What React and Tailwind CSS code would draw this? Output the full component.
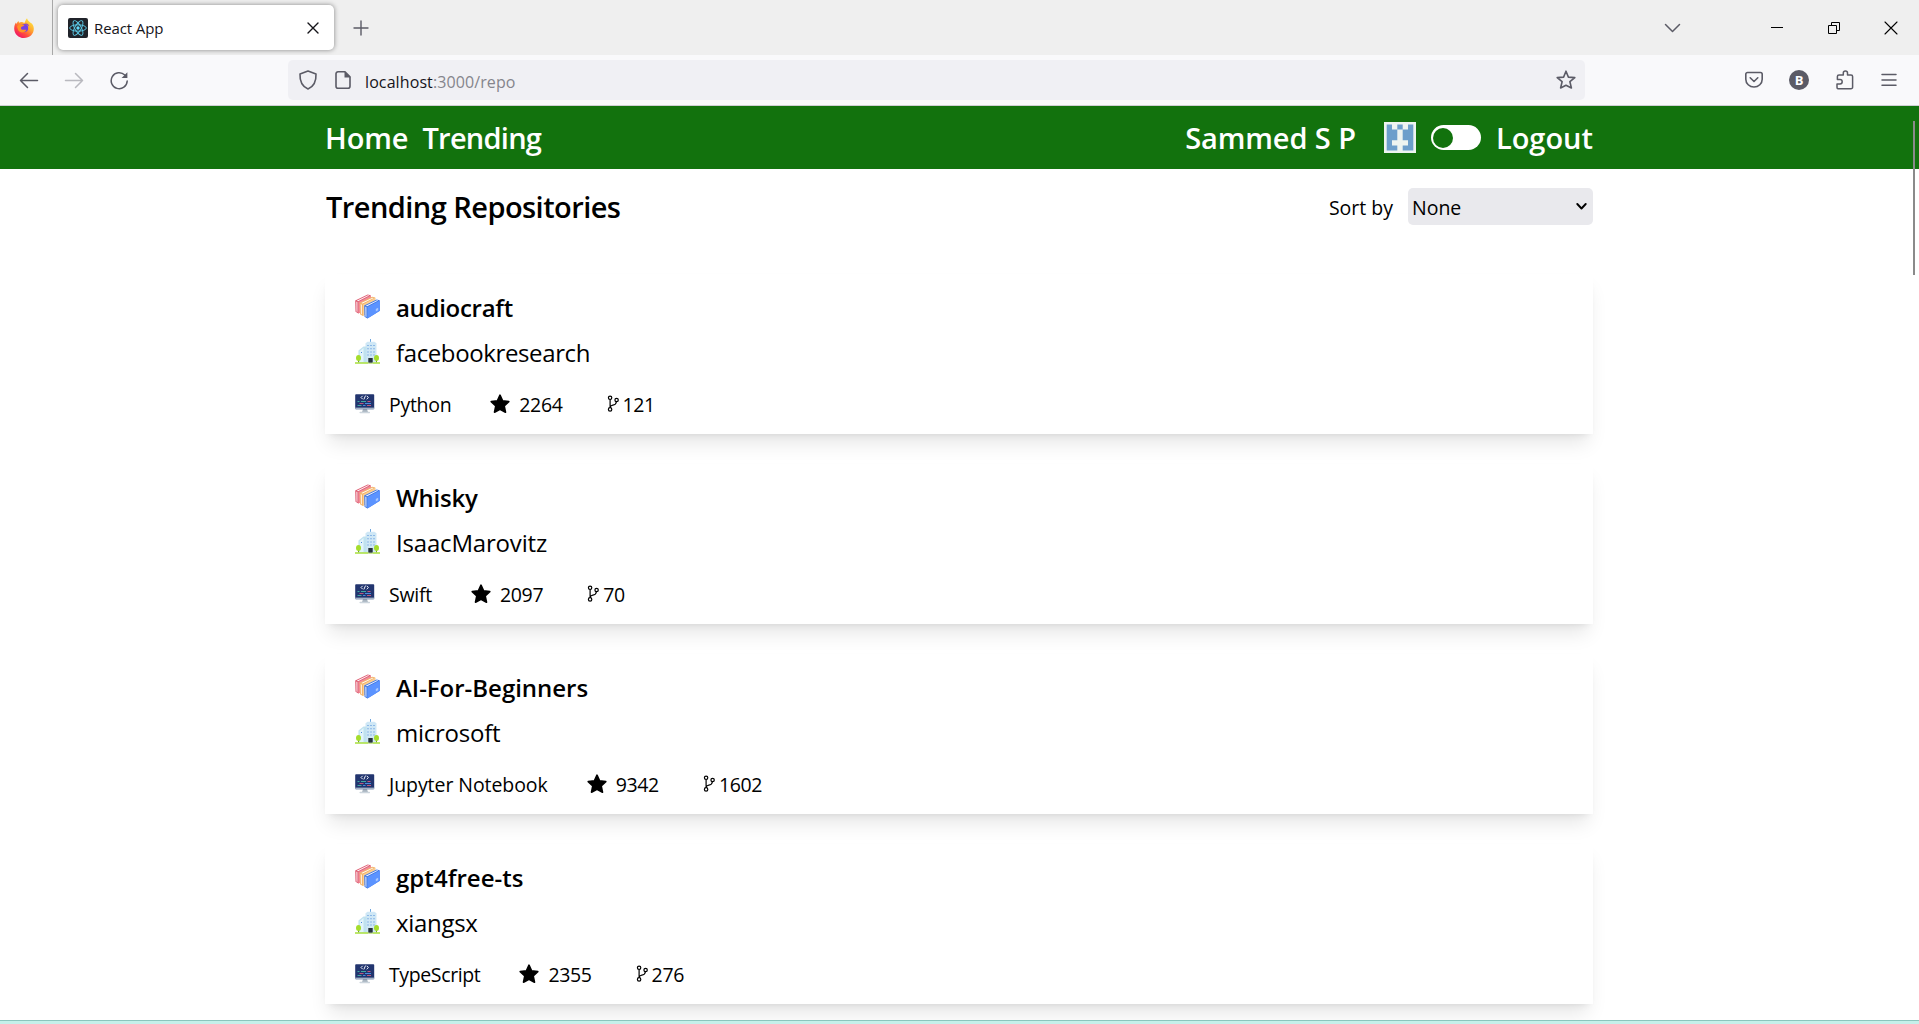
const repos = [
  { name: "audiocraft", nameCls: "tracking-[-0.3px]", owner: "facebookresearch", ownerCls: "tracking-[-0.38px]", lang: "Python", langCls: "tracking-[-0.3px]", stars: "2264", forks: "121" },
  { name: "Whisky", nameCls: "tracking-[-0.2px]", owner: "IsaacMarovitz", ownerCls: "tracking-[-0.18px]", lang: "Swift", langCls: "tracking-[-0.25px]", stars: "2097", forks: "70" },
  { name: "AI-For-Beginners", nameCls: "tracking-[-0.02px]", owner: "microsoft", ownerCls: "tracking-[-0.25px]", lang: "Jupyter Notebook", langCls: "tracking-[-0.07px]", stars: "9342", forks: "1602" },
  { name: "gpt4free-ts", nameCls: "tracking-[0.05px]", owner: "xiangsx", ownerCls: "tracking-[-0.3px]", lang: "TypeScript", langCls: "tracking-[-0.38px]", stars: "2355", forks: "276" },
];

function FirefoxLogo() {
  return (
    <svg className="h-5 w-5" viewBox="0 0 20 20">
      <defs>
        <linearGradient id="fxBody" x1="0.85" y1="0.1" x2="0.2" y2="0.95">
          <stop offset="0" stopColor="#ffe640" />
          <stop offset="0.4" stopColor="#ffa02e" />
          <stop offset="0.7" stopColor="#ff4a3f" />
          <stop offset="1" stopColor="#ee1467" />
        </linearGradient>
      </defs>
      <path d="M10 20C4.4 20 .2 15.800 .2 10.400c0-2.600.8-4.600 1.700-6l.6 1.500C3 4.500 3.800 3.600 4.600 3c0 .7.200 1.300.5 1.700 1.500-.9 3.600-.9 5.200.2 1-1.300 1.200-2.900 2.700-4.700.5 2.200 2.400 3.300 3.800 4.700 1 .4 1.500 1 1.700 1.500.9 1.300 1.300 2.700 1.300 4.300C19.800 16 15.500 20 10 20z" fill="url(#fxBody)" />
      <circle cx="10.200" cy="10" r="4" fill="#7542e5" />
      <path d="M3 8.500c2-2.600 4.600-2.600 7.400-1.400-.6 1-2 1.400-3 1.900-.5.300-.3 1.300-.3 1.900 1.600 1.700 3.600.6 5.300.8-1.500 3.400-6.600 3.700-8.300.3z" fill="#ff9426" />
      <path d="M10 6.200c2-1.800 4.800-.4 5.200 2.200-1.400-1.700-2.800-2-5.200-2.200z" fill="#8a3fc4" />
    </svg>
  );
}

function ReactIcon() {
  return (
    <svg className="h-5 w-5 shrink-0" viewBox="0 0 20 20">
      <rect width="20" height="20" rx="2" fill="#20232a" />
      <circle cx="10" cy="10" r="1.700" fill="#61dafb" />
      <g fill="none" stroke="#5cc9e6" strokeWidth="0.95">
        <ellipse cx="10" cy="10" rx="8.300" ry="3.200" />
        <ellipse cx="10" cy="10" rx="8.300" ry="3.200" transform="rotate(60 10 10)" />
        <ellipse cx="10" cy="10" rx="8.300" ry="3.200" transform="rotate(120 10 10)" />
      </g>
    </svg>
  );
}

function Line({ d, className, w = 1.5, box = "0 0 20 20", fill = "none" }) {
  return (
    <svg className={className} viewBox={box} fill={fill} stroke="currentColor" strokeWidth={w} strokeLinecap="round" strokeLinejoin="round">
      <path d={d} />
    </svg>
  );
}

function Book({ x, y, cover, spine }) {
  return (
    <g transform={`translate(${x} ${y})`}>
      <path d="M0 6.200 12.500 .2l3 .8.200 10.500L3.200 19.300.3 17.600z" fill={spine} />
      <path d="M1.600 6.500 12.900 1.100l1.100.2L2.800 7z" fill="#fff" />
      <path d="M1 7.400 2.300 8.100v9.800L1.200 17.200z" fill="#fff" opacity="0.75" />
      <path d="M3.200 7.900 15.700 1.200v10.300L3.200 19.200z" fill={cover} />
    </g>
  );
}

function Books() {
  return (
    <svg className="h-[25px] w-[25px] shrink-0" viewBox="0 0 25 25">
      <Book x={0.2} y={0.2} cover="#f08a99" spine="#df5c72" />
      <Book x={4.7} y={2.6} cover="#fbcf93" spine="#f2b269" />
      <Book x={9.2} y={5.2} cover="#5b93ff" spine="#3f78e6" />
      <path d="M20.800 15l2.400-1.300v2.500l-2.400 1.300z" fill="#a9c8ff" />
    </svg>
  );
}

function Building() {
  return (
    <svg className="h-[25px] w-[25px] shrink-0" viewBox="0 0 25 25">
      <path d="M15.500 0v4" stroke="#6aa5e0" strokeWidth="1" />
      <path d="M10.500 4.200 12.500 2.800h7L21.500 4.200V23.500h-11z" fill="#cfe7f5" />
      <path d="M3.500 11.500 8.500 7.500h3v16h-8z" fill="#c0e2ef" />
      <path d="M4.800 12 8.500 9V23H4.800z" fill="#e2f4fb" />
      <path
        d="M12.500 6h1v1h-1zM15.500 6h1v1h-1zM18.500 6h1v1h-1zM12.500 9.200h1v1h-1zM15.500 9.200h1v1h-1zM18.500 9.200h1v1h-1zM12.500 12.400h1v1h-1zM15.500 12.400h1v1h-1zM18.500 12.400h1v1h-1zM12.500 15.600h1v1h-1zM15.500 15.600h1v1h-1zM18.500 15.600h1v1h-1zM6 13h1v1H6z"
        fill="#4a8bdc"
      />
      <rect x="13.300" y="19" width="4.400" height="4.800" fill="#26323c" />
      <path d="M3.500 18v5.500M21.500 18v5.500" stroke="#6d8f2a" strokeWidth="0.900" />
      <ellipse cx="3.500" cy="19" rx="2.500" ry="3" fill="#a5dd2c" />
      <ellipse cx="21.500" cy="19" rx="2.500" ry="3" fill="#a5dd2c" />
      <path d="M0 23.300h13.300v1.500H0zM17.700 23.300H25v1.500h-7.300z" fill="#a8e03c" />
      <rect x="13.300" y="23.800" width="4.400" height="1" fill="#b9dc7c" />
    </svg>
  );
}

function Computer() {
  return (
    <svg className="h-5 w-5 shrink-0" viewBox="0 0 20 20">
      <path d="M8 15h4l1 3.200H7z" fill="#a9b5c0" />
      <rect x="4.500" y="17.700" width="10.500" height="1.500" rx="0.600" fill="#cbd4dc" />
      <rect x="0.200" y="0.200" width="19" height="15" rx="0.900" fill="#22356f" />
      <rect x="0.200" y="13.600" width="19" height="1.600" fill="#a3b2c6" />
      <path d="M7.700 1.800 6 3.500 7.700 5.200M11.700 1.800l1.700 1.700-1.700 1.700M10.500 1.600 8.900 5.400" stroke="#f0f4fc" strokeWidth="1" fill="none" />
      <path d="M2.500 7.500h2M6 7.500h5M2.500 11.500h4" stroke="#3fa9a3" strokeWidth="1" />
      <path d="M12.500 7.500h3M4.500 9.500h4M12 11.500h4" stroke="#c0597e" strokeWidth="1" />
      <path d="M10 9.500h6M8 11.500h2.500" stroke="#4a8be0" strokeWidth="1" />
    </svg>
  );
}

function Star() {
  return (
    <svg className="h-5 w-5 shrink-0" viewBox="0 0 20 20">
      <path d="M10 1.200 12.600 6.900 18.800 7.600 14.200 11.900 15.500 18.200 10 15.200 4.500 18.200 5.800 11.900 1.200 7.600 7.400 6.900z" fill="#000" stroke="#000" strokeWidth="1.600" strokeLinejoin="round" />
    </svg>
  );
}

function Fork() {
  return (
    <svg className="h-5 w-5 shrink-0" viewBox="0 0 20 20" fill="none" stroke="#000" strokeWidth="1.200">
      <circle cx="8.100" cy="3.800" r="1.700" />
      <circle cx="8.100" cy="15.400" r="1.700" />
      <circle cx="14.600" cy="6" r="1.700" />
      <path d="M8.100 5.500v8.200M14.400 7.700c-.3 2.700-1.400 3.200-3.600 3.500-1.500.2-2.500.8-2.700 2.400" />
    </svg>
  );
}

function Avatar() {
  return (
    <svg className="h-[31px] w-8" viewBox="0 0 32 31">
      <rect width="32" height="31" fill="#edf4f0" />
      <path d="M2.700 2.600H8v5h5.300v10.600H8v5.200h5.300v5H2.700zM29.300 2.600H24v5h-5.300v10.600H24v5.200h-5.300v5h10.600zM13.300 2.600h5.400v5h-5.400z" fill="#6c9fcb" />
    </svg>
  );
}

function TabStrip() {
  return (
    <div className="flex h-[55px] shrink-0 items-center bg-[#efefef]">
      <div className="flex h-full w-[53px] items-center border-r border-[#a8a8a8] pl-[14px]">
        <FirefoxLogo />
      </div>
      <div className="ml-[5px] flex h-[45px] w-[276px] items-center rounded-[5px] bg-white pr-[15px] pl-[10px] shadow-[0_0_5px_rgba(0,0,0,0.45)]">
        <ReactIcon />
        <span className="ml-[6px] flex-1 text-[15px] leading-5 tracking-[-0.1px] text-[#15141a]">React App</span>
        <Line className="h-3 w-3 text-[#15141a]" box="0 0 12 12" w={1.4} d="M1 1l10 10M11 1L1 11" />
      </div>
      <Line className="ml-[19px] h-4 w-4 text-[#5b5b66]" box="0 0 16 16" w={1.4} d="M8 1v14M1 8h14" />
      <div className="flex flex-1 items-center justify-end pr-[21px] text-black">
        <Line className="mr-[89px] h-[10px] w-[17px] text-[#5b5b66]" box="0 0 17 10" w={1.5} d="M1.500 1.500l7 7 7-7" />
        <svg className="mr-[43px] h-[14px] w-[14px]" viewBox="0 0 14 14">
          <path d="M1 6.500h12" stroke="#000" />
        </svg>
        <svg className="mr-[43px] h-[14px] w-[14px]" viewBox="0 0 14 14" fill="none" stroke="#000">
          <path d="M1.500 4.500h8v8h-8zM4.500 4.500v-3h8v8h-3" />
        </svg>
        <Line className="h-[14px] w-[14px]" box="0 0 14 14" w={1.1} d="M1 1l12 12M13 1L1 13" />
      </div>
    </div>
  );
}

function Toolbar() {
  return (
    <div className="flex h-[51px] shrink-0 items-center border-b border-[#cfcfd4] bg-[#f9f9fb] text-[#5b5b66]">
      <Line className="ml-[19px] h-5 w-5" d="M1.500 10.500h17M8.500 3.500l-7 7 7 7" />
      <Line className="ml-[25px] h-5 w-5 opacity-40" d="M1.500 10.500h17M11.500 3.500l7 7-7 7" />
      <svg className="ml-[25px] h-5 w-5" viewBox="0 0 20 20" fill="none" stroke="currentColor" strokeWidth="1.500" strokeLinecap="round">
        <path d="M18.200 11A8 8 0 1 1 15.800 5" />
        <path d="M18.400 2.200v5.800h-5.800z" fill="currentColor" stroke="none" />
      </svg>
      <div className="ml-[159px] flex h-10 w-[1297px] items-center rounded-[5px] bg-[#f0f0f4] pr-[9px] pl-[10px]">
        <Line className="h-5 w-5" w={1.6} d="M10 1l8 3c.3 6.500-1 12-8 15C3 16 1.700 10.500 2 4z" />
        <svg className="ml-[15px] h-5 w-5" viewBox="0 0 20 20" fill="none" stroke="currentColor" strokeWidth="1.600" strokeLinejoin="round">
          <path d="M5 1.800h7l5 5v9.400a2 2 0 0 1-2 2H5a2 2 0 0 1-2-2V3.800a2 2 0 0 1 2-2z" />
          <path d="M11.500 1.500v6h6z" fill="currentColor" stroke="none" />
        </svg>
        <span className="ml-[12px] flex-1 pt-[3px] text-[16px] leading-5 tracking-[0.1px] text-[#15141a]">
          localhost<span className="text-[#85858c]">:3000/repo</span>
        </span>
        <Line className="h-5 w-5" w={1.6} d="M10 1.200l2.400 5.900 6.400.5-4.900 4.100 1.500 6.300L10 15.200 4.600 18l1.500-6.300L1.200 7.600l6.400-.5z" />
      </div>
      <div className="flex flex-1 items-center justify-end pr-[21px]">
        <Line className="mr-[25px] h-5 w-5" w={1.6} d="M3.500 2.500h13a1.700 1.700 0 0 1 1.700 1.700v5a8.200 7.800 0 0 1-16.400 0v-5a1.700 1.700 0 0 1 1.700-1.700zM6.200 7.800l3.800 3.700 3.800-3.700" />
        <div className="mr-[26px] flex h-5 w-5 items-center justify-center rounded-full bg-[#5b5b66] text-[13px] leading-5 font-bold text-white">B</div>
        <Line className="mr-[25px] h-5 w-5" w={1.5} d="M3 18.800h13a1.600 1.600 0 0 0 1.600-1.600V6.600A1.600 1.600 0 0 0 16 5h-3.500V3a2.100 2.100 0 0 0-4.200 0v2H4a1.600 1.600 0 0 0-1.600 1.600V9.500H5a2.200 2.200 0 0 1 0 4.400H2v3.300A1.600 1.600 0 0 0 3 18.800z" />
        <Line className="h-5 w-[18px]" box="0 0 18 20" w={1.5} d="M2 4.500h14M2 10h14M2 15.200h14" />
      </div>
    </div>
  );
}

function NavBar() {
  return (
    <nav className="flex h-[63px] shrink-0 items-center bg-[#12720d] px-[325px] pr-[326px] text-[29px] leading-[38px] font-semibold text-white">
      <span className="tracking-[-0.1px]">Home</span>
      <span className="ml-[14px] tracking-[-0.75px]">Trending</span>
      <div className="ml-auto flex items-center gap-[15px]">
        <span className="mr-[13px] tracking-[-0.1px]">Sammed S P</span>
        <Avatar />
        <div className="flex h-[25px] w-[50px] items-center rounded-full bg-white pl-[2px]">
          <div className="h-5 w-5 rounded-full bg-[#12720d]" />
        </div>
        <span>Logout</span>
      </div>
    </nav>
  );
}

function RepoCard({ repo }) {
  return (
    <article className="h-[160px] bg-white px-[30px] pt-[15px] shadow-[0_12.5px_18.75px_-3.75px_rgba(0,0,0,0.1),0_5px_7.5px_-5px_rgba(0,0,0,0.1)]">
      <div className="flex h-[35px] items-center gap-4 text-[24px] font-semibold">
        <Books />
        <span className="pt-[2px]">
          <span className={repo.nameCls}>{repo.name}</span>
        </span>
      </div>
      <div className="mt-[10px] flex h-[35px] items-center gap-4 text-[24px]">
        <Building />
        <span className="pt-[2px]">
          <span className={repo.ownerCls}>{repo.owner}</span>
        </span>
      </div>
      <div className="mt-5 flex h-[30px] items-center gap-[39px] text-[19.5px]">
        <div className="flex items-center gap-[14px]">
          <Computer />
          <span className="pt-[2px]">
            <span className={repo.langCls}>{repo.lang}</span>
          </span>
        </div>
        <div className="flex items-center gap-[9px]">
          <Star />
          <span className="pt-[2px] tracking-[-0.35px]">{repo.stars}</span>
        </div>
        <div className="flex items-center gap-px">
          <Fork />
          <span className="pt-[2px] tracking-[-0.35px]">{repo.forks}</span>
        </div>
      </div>
    </article>
  );
}

export default function App() {
  return (
    <div className="relative flex h-[1024px] w-full flex-col overflow-hidden bg-white font-['Open_Sans',sans-serif] text-black">
      <TabStrip />
      <Toolbar />
      <NavBar />
      <main className="min-h-0 flex-1 overflow-hidden pt-[19px] pr-[326px] pl-[325px]">
        <div className="flex h-[37px] items-center">
          <h1 className="ml-px text-[29px] leading-[38px] font-semibold tracking-[-0.55px]">Trending Repositories</h1>
          <span className="ml-auto pt-[2px] text-[19.5px]">Sort by</span>
          <div className="ml-[15px] flex h-[37px] w-[185px] items-center justify-between rounded-[5px] bg-[#e9e9ed] pr-[6px] pl-1 text-[19.5px]">
            <span className="pt-[2px]">None</span>
            <Line className="h-[11px] w-[11px]" box="0 0 11 11" w={1.9} d="M1.300 3l4.200 4.500L9.700 3" />
          </div>
        </div>
        <div className="mt-[49px] flex flex-col gap-[30px]">
          {repos.map((repo) => (
            <RepoCard key={repo.name} repo={repo} />
          ))}
        </div>
      </main>
      <div className="h-1 shrink-0 border-t border-[#8cc5bd] bg-[#c5f0ea]" />
      <div className="absolute top-[121px] right-[4px] h-[154px] w-[2px] bg-[#8a8a8a]" />
    </div>
  );
}
